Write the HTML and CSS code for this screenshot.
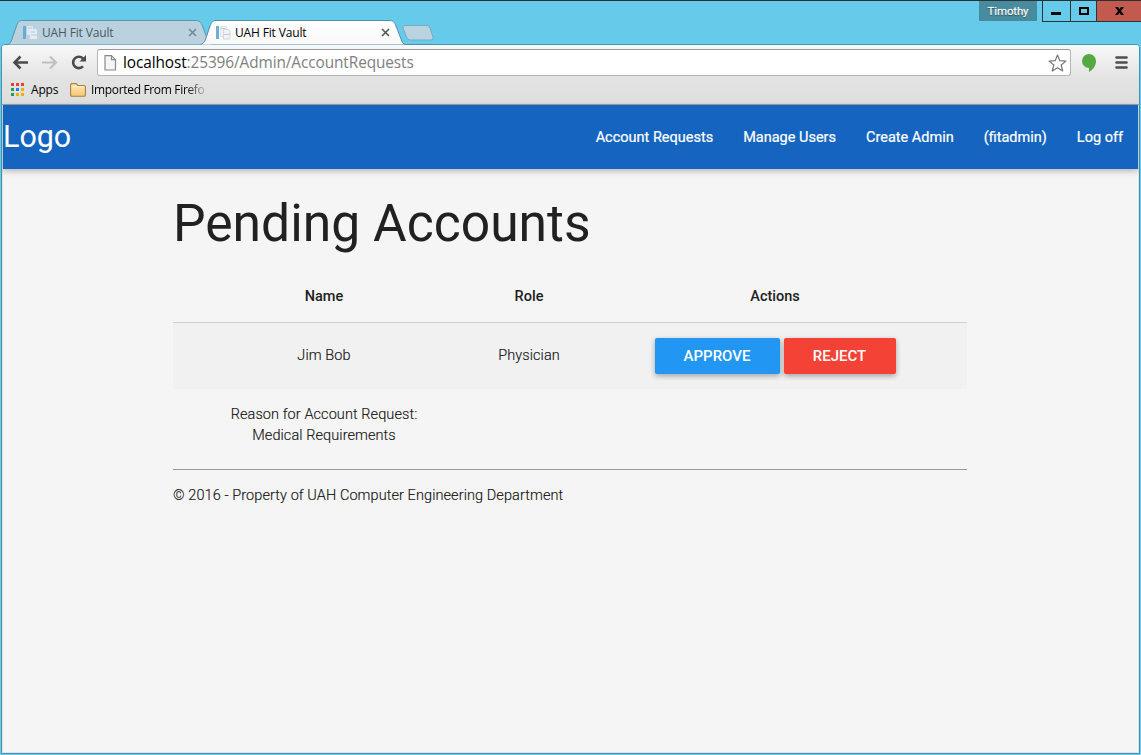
FILE: index.html
```html
<!DOCTYPE html>
<html lang="en">
<head>
<meta charset="utf-8">
<title>UAH Fit Vault</title>
<link rel="stylesheet" href="styles.css">
</head>
<body>
<header class="titlebar">
  <div class="tabs">
    <div class="tab tab-back">
      <svg class="tab-shape" width="204" height="25" viewBox="0 0 204 25"><path d="M0 24.5C2 24 3 22 4 19L8.500 6C10 1.500 11.500 .5 14.500 .5H187C191 .5 193 2 194.500 6L199 18C201 22 202 24 204 24.500" fill="#bad2df" stroke="#5b94a9"/></svg>
      <svg class="favicon" width="16" height="16" viewBox="0 0 16 16"><path d="M1 1h3v13H1z" fill="#69abd1"/><path d="M5 1h6v9H5z" fill="#dce8ef"/><path d="M8 4h6l1 1v9H8z" fill="#e3ecf2"/><path d="M6 3h4M9 7h4M9 10h6" stroke="#b4cad6"/></svg>
      <span class="tab-title">UAH Fit Vault</span>
      <svg class="tab-close" width="9" height="9" viewBox="0 0 9 9"><path d="M1 1l7 7M8 1L1 8" stroke="#71868f" stroke-width="1.500"/></svg>
    </div>
    <div class="tab tab-front">
      <svg class="tab-shape" width="204" height="25" viewBox="0 0 204 25"><defs><linearGradient id="front" x2="0" y2="1"><stop stop-color="#fff"/><stop offset="1" stop-color="#f8f8f8"/></linearGradient></defs><path d="M0 24.500C3 23 4 21 5 18L9 6C10.500 2 12 .5 15 .5H188C192 .5 193.500 2 195 6L200 19C201 22 202 24 204 24.500" fill="url(#front)" stroke="#528fa5"/></svg>
      <svg class="favicon" width="16" height="16" viewBox="0 0 16 16"><path d="M1 1h3v13H1z" fill="#72add2"/><path d="M5.500 1.500h6v10h-6z" fill="#f0f4f7" stroke="#dce2e7"/><path d="M8.500 4.500h5l1.500 1.500v8H8.500z" fill="#f1f4f7" stroke="#d0d7de"/><path d="M6 3.500h4M9 9.500h6" stroke="#bfc9d3"/></svg>
      <span class="tab-title">UAH Fit Vault</span>
      <svg class="tab-close" width="9" height="9" viewBox="0 0 9 9"><path d="M1 1l7 7M8 1L1 8" stroke="#555" stroke-width="1.600"/></svg>
    </div>
    <svg class="new-tab" width="32" height="16" viewBox="0 0 32 16"><path d="M3 .5H25Q27 .5 28 3L31 12Q32 15 29 15H8Q5.500 15 4.500 12L1 3Q.2 .5 3 .5Z" fill="#b9d3e1" stroke="#78a9bd"/></svg>
  </div>
  <div class="window-controls">
    <span class="user">Timothy</span>
    <div class="buttons">
      <span class="control minimize"><svg width="28" height="20" viewBox="0 0 28 20"><path d="M8 11h10v3H8z"/></svg></span>
      <span class="control maximize"><svg width="25" height="20" viewBox="0 0 25 20"><path d="M9 7h8v6H9z" fill="none" stroke="#000" stroke-width="2"/></svg></span>
      <span class="control close"><svg width="44" height="20" viewBox="0 0 44 20"><path d="M18 6h3l1.500 2.300L24 6h3l-3 4 3 4h-3l-1.500-2.300L21 14h-3l3-4z"/></svg></span>
    </div>
  </div>
</header>
<div class="window">
  <div class="toolbar">
    <svg class="nav-icons" width="95" height="32" viewBox="0 0 95 32"><g fill="none" stroke-width="2.600"><path d="M26 17.500H13M18.500 11.500l-6 6 6 6" stroke="#4b4b4b"/><path d="M40 17.500h13M48 11.500l6 6-6 6" stroke="#c0c0c0" stroke-width="2.200"/><path d="M81 21.300A5.700 5.700 0 1 1 81 13.500" stroke="#4b4b4b"/></g><path d="M84 10v6.500h-6.500z" fill="#4b4b4b"/></svg>
    <div class="address">
      <svg width="13" height="16" viewBox="0 0 13 16"><path d="M1 .7h6.500l4 4V15H1zM7.500 .7v4h4" fill="#f5f5f5" stroke="#888" stroke-width="1.200"/></svg>
      <span class="url"><span class="host">localhost</span>:25396/Admin/AccountRequests</span>
      <svg class="star" width="19" height="18" viewBox="0 0 19 18"><path d="M9.500 1l2.300 5.700 6.100.4-4.700 3.900 1.500 6-5.200-3.300L4.300 17l1.500-6L1.100 7.100l6.100-.4z" fill="#fff" stroke="#777" stroke-width="1.200" stroke-linejoin="round"/></svg>
    </div>
    <svg class="extension" width="14" height="18" viewBox="0 0 14 18"><path d="M7 0a7 7 0 0 1 7 7c0 5-3 8.500-7 11v-4A7 7 0 0 1 7 0z" fill="#54aa40"/></svg>
    <svg class="menu" width="13" height="13" viewBox="0 0 13 13"><path d="M1.500 1.500h10M1.500 6.500h10M1.500 11.500h10" stroke="#4e4e4e" stroke-width="2.600" stroke-linecap="round"/></svg>
  </div>
  <div class="bookmarks">
    <svg width="13" height="13" viewBox="0 0 13 13"><path d="M0 0h3v3H0zM5 0h3v3H5zM10 0h3v3h-3z" fill="#ef3b36"/><path d="M0 5h3v3H0zM0 10h3v3H0z" fill="#239b55"/><path d="M5 5h3v3H5z" fill="#1c84ef"/><path d="M10 5h3v3h-3zM5 10h3v3H5zM10 10h3v3h-3z" fill="#f5ad0c"/></svg>
    <span class="apps">Apps</span>
    <svg class="folder" width="16" height="14" viewBox="0 0 16 14"><defs><linearGradient id="folder" x2="0" y2="1"><stop stop-color="#ffebb3"/><stop offset="1" stop-color="#f5c878"/></linearGradient></defs><path d="M.6 12V2Q.6 .6 2 .6h4Q7 .6 7.500 2.500H14q1.400 0 1.400 1.400V12q0 1.300-1.400 1.300H2Q.6 13.300 .6 12z" fill="url(#folder)" stroke="#aa7f42" stroke-width="1.100"/><path d="M1.500 5l1.500-1.300h11" fill="none" stroke="#fff3cb"/></svg>
    <span class="imported">Imported From Firefo</span>
  </div>
  <div class="page">
    <nav class="navbar">
      <a class="logo">Logo</a>
      <div class="links"><a>Account Requests</a><a>Manage Users</a><a>Create Admin</a><a>(fitadmin)</a><a>Log off</a></div>
    </nav>
    <main class="container">
      <h2>Pending Accounts</h2>
      <table>
        <colgroup><col class="col-name"><col class="col-role"><col></colgroup>
        <thead><tr><th>Name</th><th>Role</th><th>Actions</th></tr></thead>
        <tbody>
          <tr class="account"><td>Jim Bob</td><td>Physician</td><td class="action-cell"><div class="actions"><button class="btn approve">APPROVE</button><button class="btn reject">REJECT</button></div></td></tr>
          <tr class="reason"><td>Reason for Account Request:<br>Medical Requirements</td><td></td><td></td></tr>
        </tbody>
      </table>
      <footer>© 2016 - Property of UAH Computer Engineering Department</footer>
    </main>
  </div>
</div>
</body>
</html>
```
FILE: styles.css
```css
* { box-sizing: border-box; }
svg { display: block; flex: none; }
body {
  margin: 0;
  height: 755px;
  overflow: hidden;
  display: flex;
  flex-direction: column;
  background: #66caea;
  border-top: 1px solid #2b3236;
  font-family: Roboto, sans-serif;
}
.titlebar { height: 43px; flex: none; display: flex; justify-content: space-between; }
.tabs { display: flex; align-items: flex-start; padding: 19px 0 0 8px; font: 12px "Open Sans", sans-serif; }
.tab { position: relative; width: 193px; height: 24px; display: flex; align-items: center; padding: 1px 0 0 14px; }
.tab-front { z-index: 2; }
.tab-shape { position: absolute; left: 0; top: 0; }
.favicon, .tab-title, .tab-close { position: relative; }
.tab-title { margin-left: 4px; width: 73px; letter-spacing: -.15px; white-space: nowrap; color: #000; }
.tab-back .tab-title { color: #4b5960; }
.tab-close { margin-left: 73px; }
.new-tab { margin: 5px 0 0 8px; }
.window-controls { display: flex; align-items: flex-start; }
.user {
  width: 58px; height: 20px; margin-right: 5px;
  background: #478b9f; color: #fff;
  font: 11.5px/20px Roboto, sans-serif; text-align: center; letter-spacing: -.15px;
  text-shadow: 0 1px 1px #24464f, 0 0 1px #dfeaed;
}
.buttons { display: flex; background: #2c3438; padding: 0 0 1px 1px; gap: 1px; }
.control { height: 20px; background: #66caea; overflow: hidden; }
.minimize { width: 27px; }
.maximize { width: 25px; }
.close { width: 44px; background: #c25a50; }
.window {
  flex: 1; min-height: 0;
  margin: 0 1px 1px 1px;
  border: 1px solid #4594aa;
  border-radius: 4px 4px 0 0;
  background: #e1e1e1;
  display: flex; flex-direction: column;
  overflow: hidden;
}
.toolbar { height: 33px; flex: none; display: flex; align-items: center; background: linear-gradient(#f8f8f8, #e3e3e3); }
.nav-icons { align-self: flex-start; }
.address {
  width: 974px; height: 27px; margin-top: 2px;
  background: #fff; border: 1px solid #b5b5b5; border-top-color: #999; border-radius: 3px;
  display: flex; align-items: center; padding: 0 3px 0 6px;
}
.url { margin: 0 0 0 6px; font: 15.400px/22px "Open Sans", sans-serif; color: #808080; letter-spacing: -.1px; }
.host { color: #000; }
.star { margin-left: auto; }
.extension { margin: 3px 0 0 11px; }
.menu { margin: 2px 0 0 19px; }
.bookmarks {
  height: 27px; flex: none; display: flex; align-items: center;
  padding: 0 0 3px 9px;
  background: linear-gradient(#e3e3e3, #dedede);
  border-bottom: 1px solid #a2a2a2;
  font: 12px "Open Sans", sans-serif; color: #000;
}
.apps { margin-left: 7px; width: 28px; letter-spacing: -.2px; }
.folder { margin-left: 11px; }
.imported {
  margin-left: 5px; width: 118px; white-space: nowrap; letter-spacing: -.33px;
  -webkit-mask-image: linear-gradient(90deg, #000 95px, transparent 118px);
  mask-image: linear-gradient(90deg, #000 95px, transparent 118px);
}
.page { flex: 1; margin: 0 1px 1px; background: #f5f5f5; color: rgba(0, 0, 0, .87); }
.navbar {
  height: 64px; display: flex; align-items: center; justify-content: space-between;
  background: #1565c0; color: #fff;
  box-shadow: 0 2px 5px rgba(0, 0, 0, .16), 0 2px 8px rgba(0, 0, 0, .12);
}
.logo { font-size: 30.450px; padding-bottom: 1px; }
.links { display: flex; font-size: 14.500px; }
.links a { padding: 0 15px; white-space: nowrap; -webkit-text-stroke: .2px #fff; }
.container { width: 794px; margin-left: 170px; font-size: 14.500px; font-weight: 300; color: #151515; }
h2 { margin: 26px 0 19px; font-size: 51.620px; line-height: 57px; font-weight: 400; white-space: nowrap; color: #212121; }
table { width: 100%; table-layout: fixed; border-collapse: collapse; text-align: center; line-height: 21px; letter-spacing: .08px; }
.col-name { width: 302px; }
.col-role { width: 108px; }
th { height: 51px; padding: 0; font-weight: 500; letter-spacing: 0; color: #212121; }
thead { border-bottom: 1px solid #d0d0d0; }
td { padding: 0; white-space: nowrap; -webkit-text-stroke: .15px #151515; }
.account { height: 67px; background: #f1f1f1; }
.account td { padding-bottom: 1px; }
.account .action-cell { padding: 1px 0 0; }
.reason td { height: 80px; padding-bottom: 9px; }
.actions { display: flex; justify-content: center; gap: 4px; }
.btn {
  height: 36px; padding: 0; border: 0; border-radius: 2px;
  color: #fff; font: 500 15px/36px Roboto, sans-serif;
  -webkit-text-stroke: 0;
  box-shadow: 0 2px 5px rgba(0, 0, 0, .2), 0 2px 6px rgba(0, 0, 0, .14);
}
.approve { width: 125px; background: #2196f3; }
.reject { width: 112px; background: #f44336; }
footer { border-top: 1px solid #999; padding-top: 15px; line-height: 22px; letter-spacing: .08px; -webkit-text-stroke: .15px #151515; }
```
